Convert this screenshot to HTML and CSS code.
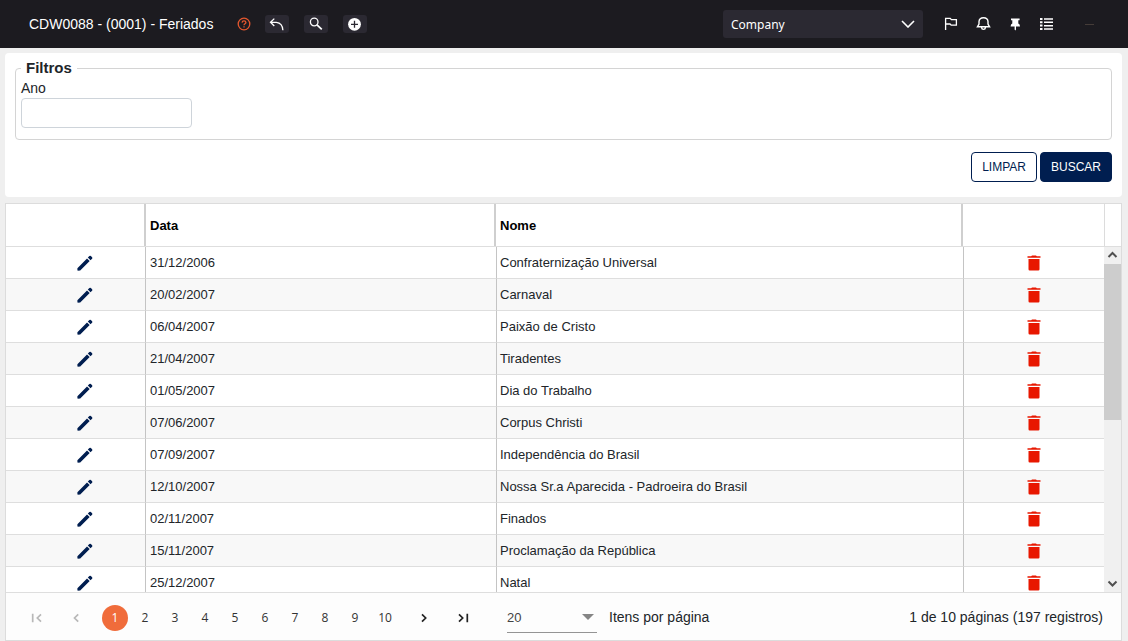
FILE: index.html
```
<!DOCTYPE html>
<html lang="pt-BR">
<head>
<meta charset="utf-8">
<title>CDW0088 - Feriados</title>
<link rel="stylesheet" href="styles.css">
<script src="app.js" defer></script>
</head>
<body>
<svg class="sprite" aria-hidden="true">
  <symbol id="pencil" viewBox="0 0 16 16"><path d="M.4 13.2 10 3.4 12.7 6 3.2 15.4l-2.5.3q-.5-.9-.3-2.5zM10.8 2.6 12.4 1q.8-.6 1.5 0l1.2 1.2q.6.7 0 1.5l-1.6 1.6z"/></symbol>
  <symbol id="trash" viewBox="0 0 14 16"><path d="M4.2 1.2 5 .4h4l.8.8h3.7v1.5H.5V1.2zM1.5 3.9h11v10.3q0 1.2-1.2 1.2H2.7q-1.2 0-1.2-1.2z"/></symbol>
</svg>
<header class="topbar">
  <h1 class="title">CDW0088 - (0001) - Feriados</h1>
  <button class="help" aria-label="Ajuda"><svg width="14" height="14" viewBox="0 0 14 14" fill="none" stroke="currentColor" stroke-width="1.3"><circle cx="7" cy="7" r="5.8"/><path d="M5.1 5.6q.1-1.8 1.9-1.8t1.9 1.6c0 1.3-1.9 1.3-1.9 2.8M7 9.2v1.3"/></svg></button>
  <div class="tools">
    <button class="tool" aria-label="Voltar"><svg width="16" height="16" viewBox="0 0 16 16" fill="none" stroke="currentColor" stroke-width="1.3"><path d="M5.3 2.6 1.5 6.3 5.3 10M1.5 6.3h5.8q6.2.6 6.6 7.9"/></svg></button>
    <button class="tool" aria-label="Pesquisar"><svg width="16" height="16" viewBox="0 0 16 16" fill="none" stroke="currentColor" stroke-width="1.3"><circle cx="6.2" cy="6" r="3.8"/><path d="m9 8.8 4.8 4.6" stroke-width="1.7"/></svg></button>
    <button class="tool" aria-label="Adicionar"><svg width="16" height="16" viewBox="0 0 16 16"><circle cx="7.5" cy="8.3" r="6.4" fill="currentColor"/><path d="M7.5 4.8v7M4 8.3h7" stroke="#2b2932" stroke-width="1.3"/></svg></button>
  </div>
  <div class="company">
    <select class="company-select" aria-label="Empresa"><option>Company</option></select>
    <svg class="company-arrow" width="14" height="8" viewBox="0 0 14 8" fill="none" stroke="#fff" stroke-width="1.6"><path d="m1 1 6 6 6-6"/></svg>
  </div>
  <nav class="actions" aria-label="Atalhos">
    <button class="action" aria-label="Marcar"><svg width="16" height="16" viewBox="0 0 16 16" fill="none" stroke="currentColor" stroke-width="1.3"><path d="M2.6 14V2.3h4.6l1.2 1.4h5v5.5H8.2L7 8H2.6"/></svg></button>
    <button class="action" aria-label="Notificações"><svg width="16" height="16" viewBox="0 0 16 16" fill="none" stroke="currentColor" stroke-width="1.4"><path d="M2.4 10.8h12.2L13 8V5.6q-.3-3.9-4.5-3.9T4 5.6V8zM6.5 11.4q.2 2 2 2t2-2"/></svg></button>
    <button class="action" aria-label="Fixar"><svg width="16" height="16" viewBox="0 0 16 16" fill="currentColor"><path d="M4 2.6h8.6v1.6h-1.3v3.4q1.7.6 1.7 3H9v3l-.7 1-.7-1v-3h-4q0-2.4 1.7-3V4.2H4z"/></svg></button>
    <button class="action" aria-label="Menu"><svg width="16" height="16" viewBox="0 0 16 16" fill="currentColor"><path d="M1 2h2.5v2H1zm0 3.2h2.5v2H1zm0 3.4h2.5v2H1zM1 12h2.5v2H1zM5 2.2h9v1.5H5zm0 3.3h9V7H5zm0 3.4h9v1.5H5zm0 3.3h9v1.5H5z"/></svg></button>
  </nav>
  <span class="dash"></span>
</header>
<main class="page">
  <form class="filters">
    <fieldset class="group">
      <legend class="legend">Filtros</legend>
      <label class="label" for="ano">Ano</label>
      <input class="field" id="ano" type="text">
    </fieldset>
    <div class="buttons">
      <button class="btn" type="reset">LIMPAR</button>
      <button class="btn btn-primary" type="button">BUSCAR</button>
    </div>
  </form>
  <section class="grid">
    <div class="grid-head">
      <table class="table">
        <colgroup><col class="h-edit"><col class="h-date"><col class="h-name"><col class="h-del"></colgroup>
        <thead><tr><th aria-label="Editar"></th><th>Data</th><th>Nome</th><th aria-label="Excluir"></th></tr></thead>
      </table>
      <div class="head-gap"></div>
    </div>
    <div class="grid-body">
      <div class="rows">
        <table class="table">
          <colgroup><col class="c-edit"><col class="c-date"><col class="c-name"><col class="c-del"></colgroup>
          <tbody id="rows"></tbody>
        </table>
      </div>
      <div class="scroll" aria-hidden="true">
        <svg class="scroll-end" viewBox="0 0 17 17"><path d="m4.5 10 4-4 4 4"/></svg>
        <div class="scroll-track"><div class="scroll-thumb"></div></div>
        <svg class="scroll-end" viewBox="0 0 17 17"><path d="m4.5 6.5 4 4 4-4"/></svg>
      </div>
    </div>
    <footer class="pager">
      <button class="step" aria-label="Primeira página" disabled><svg width="12" height="12" viewBox="0 0 12 12"><path d="M1.7 1.7v8.6M10 2.3 6.3 6 10 9.7"/></svg></button>
      <button class="step" aria-label="Página anterior" disabled><svg width="12" height="12" viewBox="0 0 12 12"><path d="M8.2 2.3 4.5 6l3.7 3.7"/></svg></button>
      <div class="pages">
        <button class="num current">1</button><button class="num">2</button><button class="num">3</button><button class="num">4</button><button class="num">5</button><button class="num">6</button><button class="num">7</button><button class="num">8</button><button class="num">9</button><button class="num">10</button>
      </div>
      <button class="step" aria-label="Próxima página"><svg width="12" height="12" viewBox="0 0 12 12"><path d="M4 2.3 7.7 6 4 9.7"/></svg></button>
      <button class="step" aria-label="Última página"><svg width="12" height="12" viewBox="0 0 12 12"><path d="M2 2.3 5.7 6 2 9.7M10.3 1.7v8.6"/></svg></button>
      <div class="size">
        <select class="size-select" id="size"><option>20</option></select>
        <svg class="size-arrow" width="12" height="6" viewBox="0 0 12 6"><path d="M0 0h12L6 6z" fill="#858585"/></svg>
      </div>
      <label class="size-label" for="size">Itens por página</label>
      <span class="total">1 de 10 páginas (197 registros)</span>
    </footer>
  </section>
</main>
</body>
</html>
```
FILE: styles.css
```
* { box-sizing: border-box; }
body {
  margin: 0;
  height: 100vh;
  display: flex;
  flex-direction: column;
  background: #efefef;
  color: #212529;
  font: 14px/20px "Liberation Sans", Arial, sans-serif;
}
button, input, select { font: inherit; color: inherit; }
button { border: 0; padding: 0; background: none; cursor: pointer; }
svg { display: block; }
.sprite { position: absolute; width: 0; height: 0; }

.topbar {
  flex: none;
  display: flex;
  align-items: center;
  height: 48px;
  padding: 0 34px 0 29px;
  background: #1c1b20;
  color: #fff;
}
.title { margin: 0; font-size: 14px; font-weight: 400; }
.help { margin: 0 14px 0 24px; color: #e4572e; }
.tools { display: flex; gap: 15px; }
.tool {
  display: grid;
  place-items: center;
  width: 24px;
  height: 18px;
  border-radius: 3px;
  background: #2b2932;
}
.company { position: relative; width: 200px; margin-left: auto; }
.company-select {
  display: block;
  width: 100%;
  height: 28px;
  padding: 2px 8px 0;
  border: 0;
  border-radius: 3px;
  appearance: none;
  background: #2b2932;
  font: 12px/26px "Noto Sans", sans-serif;
}
.company-arrow { position: absolute; right: 8px; top: 10px; pointer-events: none; }
.actions { display: flex; gap: 16px; margin: 0 30px 0 20px; }
.dash { width: 9px; height: 1px; background: #453c38; }

.page {
  flex: 1;
  min-height: 0;
  display: flex;
  flex-direction: column;
  gap: 6px;
  padding: 5px 6px 0 5px;
}
.filters {
  flex: none;
  padding: 5px 10px 15px;
  border-radius: 4px;
  background: #fff;
}
.group {
  margin: 0;
  padding: 0 5px 11px;
  border: 1px solid #d4d4d4;
  border-radius: 4px;
}
.legend { padding: 0 5px; font-size: 15px; font-weight: 700; }
.label { display: block; }
.field {
  display: block;
  width: 171px;
  height: 30px;
  padding: 0 8px;
  border: 1px solid #ced4da;
  border-radius: 4px;
  background: #fff;
}
.buttons { display: flex; justify-content: flex-end; gap: 3px; margin-top: 12px; }
.btn {
  height: 30px;
  padding: 0 10px;
  border: 1px solid #001e50;
  border-radius: 4px;
  background: #fff;
  color: #001e50;
  font-size: 12px;
}
.btn-primary { background: #001e50; color: #fff; }

.grid {
  flex: 1;
  min-height: 0;
  display: flex;
  flex-direction: column;
  border: 1px solid #dcdcdc;
  background: #fff;
}
.grid-head { flex: none; display: flex; border-bottom: 1px solid #dedede; }
.head-gap { flex: none; width: 17px; border-left: 1px solid #dcdcdc; }
.table {
  width: 100%;
  table-layout: fixed;
  border-collapse: separate;
  border-spacing: 0;
  font-size: 13px;
}
.h-edit { width: 138px; }
.h-date { width: 350px; }
.h-name { width: 467px; }
.h-del { width: 143px; }
.c-edit { width: 139px; }
.c-date { width: 351px; }
.c-name { width: 467px; }
.c-del { width: 141px; }
th {
  height: 42px;
  padding: 2px 4px 0;
  color: #000;
  text-align: left;
}
th + th { border-left: 2px solid #cfcfcf; }
.grid-body { flex: 1; min-height: 0; display: flex; }
.rows { flex: 1; min-width: 0; overflow: hidden; }
td {
  height: 32px;
  padding: 0 4px;
  border-bottom: 1px solid #dedede;
}
td + td { border-left: 1px solid #c4c4c4; }
td:nth-child(3) { padding-left: 3px; }
tr:nth-child(even) td { background: #f8f8f8; }
.icon-btn { display: block; margin: 0 auto; }
.icon-btn svg { fill: currentColor; }
.edit { padding-left: 18px; color: #001e50; }
.delete { color: #e81700; }

.scroll { flex: none; display: flex; flex-direction: column; width: 17px; background: #f0f0f0; }
.scroll-end { flex: none; height: 17px; fill: none; stroke: #505050; stroke-width: 2; }
.scroll-track { flex: 1; }
.scroll-thumb { height: 50%; background: #cdcdcd; }

.pager {
  flex: none;
  display: flex;
  align-items: center;
  height: 48px;
  padding: 3px 18px 0 22px;
  border-top: 1px solid #dedede;
  background: #fdfdfd;
}
.step { display: grid; place-items: center; width: 18px; height: 26px; margin-right: 21px; }
.step svg { fill: none; stroke: #222; stroke-width: 1.7; }
.step:disabled svg { stroke: #b8b8b8; }
.pages { display: flex; gap: 4px; margin-right: 17px; margin-left: -4px; }
.num {
  width: 26px;
  height: 26px;
  border-radius: 50%;
  font: 12px/26px "Open Sans", sans-serif;
  color: #333;
}
.num.current { background: #f06c3b; color: #fff; }
.size { position: relative; width: 90px; margin: 0 12px 0 14px; }
.size-select {
  display: block;
  width: 100%;
  height: 30px;
  padding: 0;
  border: 0;
  border-bottom: 1px solid #949494;
  border-radius: 0;
  appearance: none;
  background: none;
  color: #444;
  font-size: 13px;
}
.size-arrow { position: absolute; right: 3px; top: 11px; pointer-events: none; }
.size-label, .total { padding-bottom: 3px; }
.total { margin-left: auto; }
```
FILE: app.js
```
const holidays = [
  ["31/12/2006", "Confraternização Universal"],
  ["20/02/2007", "Carnaval"],
  ["06/04/2007", "Paixão de Cristo"],
  ["21/04/2007", "Tiradentes"],
  ["01/05/2007", "Dia do Trabalho"],
  ["07/06/2007", "Corpus Christi"],
  ["07/09/2007", "Independência do Brasil"],
  ["12/10/2007", "Nossa Sr.a Aparecida - Padroeira do Brasil"],
  ["02/11/2007", "Finados"],
  ["15/11/2007", "Proclamação da República"],
  ["25/12/2007", "Natal"]
];

document.getElementById("rows").innerHTML = holidays.map(([date, name]) => `
  <tr>
    <td><button class="icon-btn edit" aria-label="Editar ${name}"><svg width="16" height="16"><use href="#pencil"/></svg></button></td>
    <td>${date}</td>
    <td>${name}</td>
    <td><button class="icon-btn delete" aria-label="Excluir ${name}"><svg width="14" height="16"><use href="#trash"/></svg></button></td>
  </tr>`).join("");
```
